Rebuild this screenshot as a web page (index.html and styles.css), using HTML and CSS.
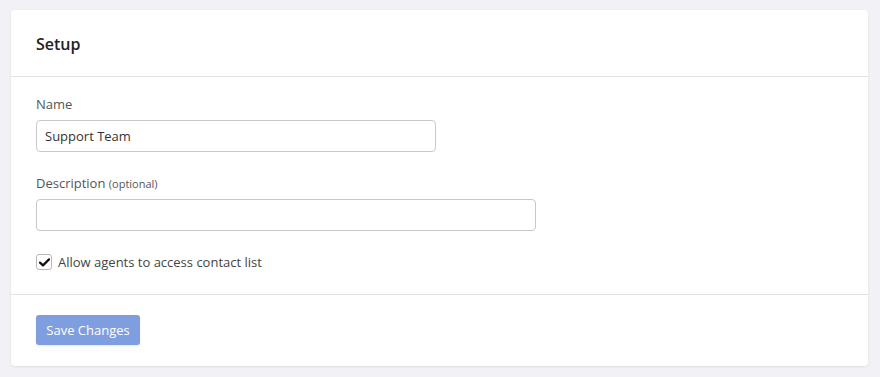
FILE: index.html
```html
<!DOCTYPE html>
<html>
<head>
<meta charset="utf-8">
<link rel="stylesheet" href="styles.css">
</head>
<body>
<div class="card">
  <div class="card-header">
    <h2 class="title">Setup</h2>
  </div>
  <div class="card-body">
    <div class="field">
      <label class="label">Name</label>
      <input class="input input-name" type="text" value="Support Team">
    </div>
    <div class="field">
      <label class="label">Description <span class="hint">(optional)</span></label>
      <input class="input input-desc" type="text" value="">
    </div>
    <label class="check">
      <span class="box">
        <svg width="11" height="9" viewBox="0 0 11 9"><path d="M1 4.6 L4 7.4 L10 1.4" fill="none" stroke="#111" stroke-width="2.2" stroke-linecap="round" stroke-linejoin="round"/></svg>
      </span>
      <span class="check-text">Allow agents to access contact list</span>
    </label>
  </div>
  <div class="card-footer">
    <button class="btn">Save Changes</button>
  </div>
</div>
</body>
</html>
```

FILE: styles.css
```css
* { box-sizing: border-box; }
html, body { margin: 0; padding: 0; }
body {
  background: #f2f2f6;
  font-family: "Open Sans", "Liberation Sans", sans-serif;
  color: #333;
  padding: 10px 12px 11px 11px;
}
.card {
  background: #fff;
  border-radius: 4px;
  box-shadow: 0 1px 3px rgba(0,0,0,0.08);
  height: 356px;
}
.card-header {
  height: 67px;
  border-bottom: 1px solid #e2e2e4;
  padding: 0 25px;
  display: flex;
  align-items: center;
}
.title {
  margin: 0;
  font-size: 16px;
  font-weight: 600;
  color: #222;
  padding-top: 1px;
}
.card-body {
  padding: 18px 25px 0;
  height: 218px;
  border-bottom: 1px solid #e2e2e4;
}
.field { display: flex; flex-direction: column; margin-bottom: 22px; }
.label {
  font-size: 13px;
  color: #555;
  line-height: 18px;
  height: 18px;
  margin-bottom: 7px;
}
.hint { font-size: 11px; color: #555; line-height: 1; }
.input {
  height: 32px;
  border: 1px solid #c8c8c8;
  border-radius: 4px;
  font-family: inherit;
  font-size: 13px;
  color: #333;
  padding: 0 8px;
  outline: none;
}
.input-name { width: 400px; }
.input-desc { width: 500px; }
.check {
  display: flex;
  align-items: center;
  gap: 6px;
  margin-top: 3px;
}
.box {
  width: 16px;
  height: 16px;
  border: 1px solid #b8b8b8;
  border-radius: 3px;
  display: flex;
  align-items: center;
  justify-content: center;
}
.check-text { font-size: 13px; color: #444; }
.card-footer { padding: 20px 25px; }
.btn {
  background: #7f9ee0;
  color: #fff;
  border: none;
  border-radius: 3px;
  height: 30px;
  width: 104px;
  font-family: inherit;
  font-size: 13px;
  padding: 0;
  box-shadow: 0 1px 2px rgba(0,0,0,0.1);
}
```
